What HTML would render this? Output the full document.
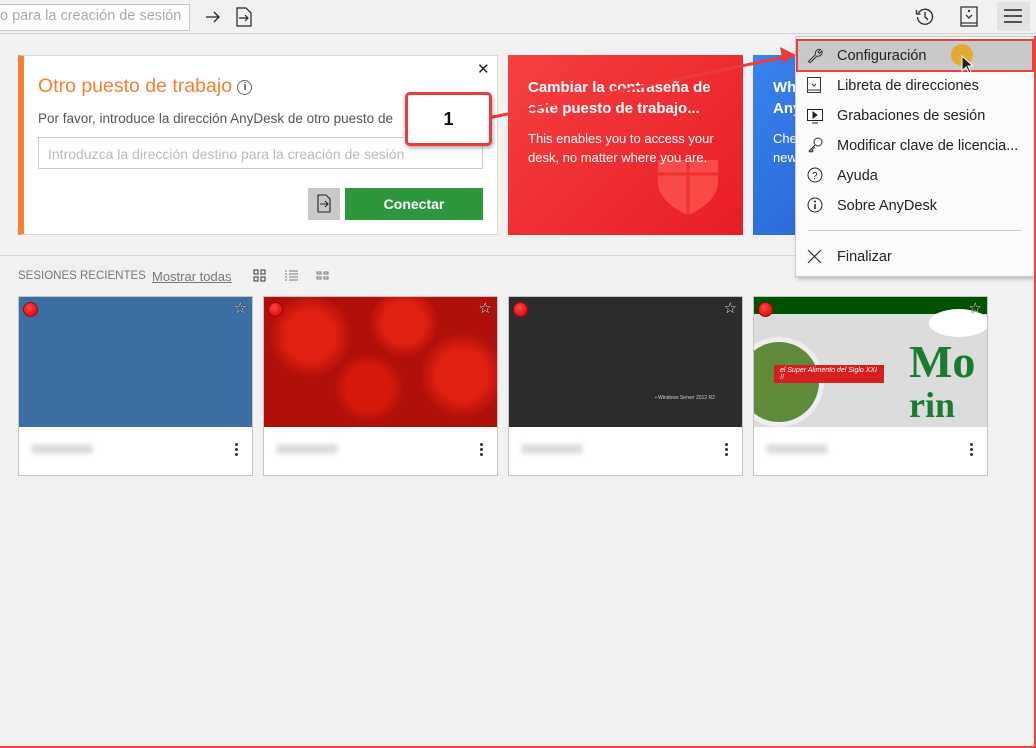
<!DOCTYPE html>
<html><head><meta charset="utf-8">
<style>
*{box-sizing:border-box;margin:0;padding:0}
body{width:1036px;height:748px;background:#f1f1f1;font-family:"Liberation Sans","DejaVu Sans",sans-serif;position:relative;overflow:hidden;color:#333}
.abs{position:absolute}
.tile{position:absolute;top:296px;width:235px;height:180px;background:#fff;border:1px solid #c4c4c4}
.tile .img{position:absolute;left:0;top:0;width:233px;height:130px}
.tile .dot{position:absolute;left:4px;top:5px;width:15px;height:15px;border-radius:50%;background:radial-gradient(circle at 40% 35%,#f44,#c00);border:1px solid #a00}
.tile .star{position:absolute;right:5px;top:2px;color:#fff;font-size:15px;text-shadow:0 0 1px #000,0 0 1px #000}
.tile .id{position:absolute;left:12px;top:147px;width:62px;height:10px;background:#ddd;filter:blur(2px);border-radius:3px}
.tile .more{position:absolute;right:14px;top:146px;width:3px}
.tile .more i{display:block;width:3px;height:3px;background:#333;border-radius:50%;margin-bottom:2px}
.mi{position:absolute;left:41px;font-size:14.5px;color:#222}
.ic{position:absolute;left:11px}
</style></head><body>
<div class="abs" style="left:0;top:0;width:1036px;height:34px;background:#f1f1f1;border-bottom:1px solid #d2d2d2"></div>
<div class="abs" style="left:-2px;top:4px;width:192px;height:27px;background:#fff;border:1px solid #c8c8c8"></div>
<div class="abs" style="left:0;top:8px;font-size:14.5px;color:#aaa;white-space:nowrap">o para la creación de sesión</div>
<svg class="abs" style="left:204px;top:8px" width="18" height="18" viewBox="0 0 18 18"><path d="M2 9h13M10 4l5 5-5 5" stroke="#222" stroke-width="1.3" fill="none"/></svg>
<svg class="abs" style="left:236px;top:7px" width="16" height="20" viewBox="0 0 16 20"><path d="M1 1h9l5 5v13H1z" stroke="#222" stroke-width="1.2" fill="none"/><path d="M3 11h9M9 8l3 3-3 3" stroke="#222" stroke-width="1.2" fill="none"/></svg>
<svg class="abs" style="left:915px;top:7px" width="20" height="20" viewBox="0 0 20 20"><path d="M3.5 6A7.5 7.5 0 1 1 2.5 10" stroke="#333" stroke-width="1.4" fill="none"/><path d="M1.5 3v4h4" stroke="#333" stroke-width="1.4" fill="none"/><path d="M10 5v5l3 3" stroke="#333" stroke-width="1.4" fill="none"/></svg>
<svg class="abs" style="left:960px;top:6px" width="18" height="22" viewBox="0 0 18 22"><rect x="1" y="1" width="16" height="19" stroke="#333" stroke-width="1.3" fill="none"/><path d="M1 17h16" stroke="#333" stroke-width="1.2"/><circle cx="9" cy="5" r="1.2" fill="#333"/><path d="M6 9l3 3 3-3" stroke="#333" stroke-width="1.3" fill="none"/></svg>
<div class="abs" style="left:997px;top:2px;width:33px;height:29px;background:#e2e2e2"></div>
<svg class="abs" style="left:1004px;top:9px" width="19" height="15"><path d="M0 1h18M0 7h18M0 13h18" stroke="#222" stroke-width="1.4"/></svg>

<div class="abs" style="left:18px;top:55px;width:480px;height:180px;background:#fff;border:1px solid #d8d8d8;border-left:6px solid #f58033"></div>
<div class="abs" style="left:38px;top:75px;font-size:19.5px;color:#f58033">Otro puesto de trabajo <span style="display:inline-block;width:15px;height:15px;border:1.3px solid #666;border-radius:50%;font-size:11px;color:#555;text-align:center;line-height:13px;vertical-align:2px;font-weight:bold">i</span></div>
<div class="abs" style="left:477px;top:60px;font-size:15px;color:#222">✕</div>
<div class="abs" style="left:38px;top:111px;font-size:13.5px;color:#555;white-space:nowrap">Por favor, introduce la dirección AnyDesk de otro puesto de</div>
<div class="abs" style="left:38px;top:137px;width:445px;height:32px;border:1px solid #ccc;background:#fff"></div>
<div class="abs" style="left:48px;top:146px;font-size:14px;color:#bbb;white-space:nowrap">Introduzca la dirección destino para la creación de sesión</div>
<div class="abs" style="left:308px;top:188px;width:32px;height:32px;background:#c8c8c8"></div>
<svg class="abs" style="left:317px;top:194px" width="14" height="19" viewBox="0 0 14 19"><path d="M1 1h8l4 4v13H1z" stroke="#222" stroke-width="1.1" fill="none"/><path d="M3 10h8M8 7l3 3-3 3" stroke="#222" stroke-width="1.1" fill="none"/></svg>
<div class="abs" style="left:345px;top:188px;width:138px;height:32px;background:#2e963c;color:#fff;font-size:14px;font-weight:bold;text-align:center;line-height:32px">Conectar</div>

<div class="abs" style="left:508px;top:55px;width:235px;height:180px;background:linear-gradient(135deg,#f54040,#e81d25);overflow:hidden">
<svg class="abs" style="left:150px;top:105px" width="60" height="55" viewBox="0 0 60 55"><path d="M0 0h60v22c0 15-15 27-30 33C15 49 0 37 0 22z" fill="#ff5b55" opacity=".7"/><path d="M30 0v55M0 14h60" stroke="#f0302f" stroke-width="3"/></svg>
</div>
<div class="abs" style="left:528px;top:77px;width:210px;font-size:15px;font-weight:bold;color:#fff;line-height:21px">Cambiar la contraseña de este puesto de trabajo...</div>
<div class="abs" style="left:528px;top:129px;width:210px;font-size:13px;color:#fff;line-height:19px">This enables you to access your desk, no matter where you are.</div>
<div class="abs" style="left:753px;top:55px;width:60px;height:180px;background:linear-gradient(135deg,#3a82ee,#2a6ad8)"></div>
<div class="abs" style="left:773px;top:77px;font-size:15px;font-weight:bold;color:#fff;line-height:21px">Wh<br>Any</div>
<div class="abs" style="left:773px;top:129px;font-size:13px;color:#fff;line-height:19px">Che<br>new</div>

<div class="abs" style="left:0;top:255px;width:800px;height:1px;background:#d6d6d6"></div>

<div class="abs" style="left:18px;top:270px;font-size:11.5px;color:#777;white-space:nowrap">SESIONES RECIENTES</div>
<div class="abs" style="left:152px;top:269px;font-size:13px;color:#777;text-decoration:underline">Mostrar todas</div>
<svg class="abs" style="left:253px;top:269px" width="13" height="13"><rect x="1" y="1" width="4" height="4" fill="none" stroke="#333"/><rect x="8" y="1" width="4" height="4" fill="none" stroke="#333"/><rect x="1" y="8" width="4" height="4" fill="none" stroke="#333"/><rect x="8" y="8" width="4" height="4" fill="none" stroke="#333"/></svg>
<svg class="abs" style="left:285px;top:270px" width="13" height="12"><path d="M0 1h2M4 1h9M0 4h2M4 4h9M0 7h2M4 7h9M0 10h2M4 10h9" stroke="#777"/></svg>
<svg class="abs" style="left:316px;top:271px" width="13" height="10"><rect x="1" y="1" width="4" height="2" fill="none" stroke="#777"/><rect x="8" y="1" width="4" height="2" fill="none" stroke="#777"/><rect x="1" y="6" width="4" height="2" fill="none" stroke="#777"/><rect x="8" y="6" width="4" height="2" fill="none" stroke="#777"/></svg>

<div class="tile" style="left:18px"><div class="img" style="background:#3b6ea3"></div><div class="dot"></div><div class="star">☆</div><div class="id"></div><div class="more"><i></i><i></i><i></i></div></div>
<div class="tile" style="left:263px"><div class="img" style="background:radial-gradient(circle at 20% 30%,#e02010 0 12%,transparent 20%),radial-gradient(circle at 60% 20%,#e02010 0 12%,transparent 20%),radial-gradient(circle at 45% 70%,#d81a0c 0 14%,transparent 22%),radial-gradient(circle at 85% 60%,#e02010 0 12%,transparent 20%),#b0100a"></div><div class="dot"></div><div class="star">☆</div><div class="id"></div><div class="more"><i></i><i></i><i></i></div></div>
<div class="tile" style="left:508px"><div class="img" style="background:#2c2c2c"><div class="abs" style="left:146px;top:98px;font-size:5px;color:#ccc">▪ Windows Server 2012 R2</div></div><div class="dot"></div><div class="star">☆</div><div class="id"></div><div class="more"><i></i><i></i><i></i></div></div>
<div class="tile" style="left:753px"><div class="img" style="background:linear-gradient(#005200 0 13%,#dcdcdc 13%);overflow:hidden">
<div class="abs" style="left:-20px;top:40px;width:90px;height:90px;border-radius:50%;background:#5f8a3a;border:5px solid #eee"></div>
<div class="abs" style="left:20px;top:68px;width:110px;height:18px;background:#d81f1f;color:#fff;font-size:7px;font-style:italic;padding:2px 6px">el Super Alimento del Siglo XXI !!</div>
<div class="abs" style="left:155px;top:45px;font-size:46px;font-family:'Liberation Serif',serif;color:#1a7a30;font-weight:bold;line-height:40px">Mo<br><span style="font-size:36px">rin</span></div>
<div class="abs" style="left:175px;top:12px;width:60px;height:28px;border-radius:50%;background:#fff"></div>
</div><div class="dot"></div><div class="star">☆</div><div class="id"></div><div class="more"><i></i><i></i><i></i></div></div>

<div class="abs" style="left:795px;top:36px;width:241px;height:241px;background:#fbfbfb;border:1px solid #ccc;box-shadow:2px 2px 4px rgba(0,0,0,.25)">
<div class="abs" style="left:0;top:2px;width:238px;height:33px;background:#c9c9c9;border:2px solid #ee3b3b"></div>
<svg class="ic" style="top:10px" width="16" height="16" viewBox="0 0 16 16"><path d="M1.5 14.5l7-7a4 4 0 0 1 5-5l-2.5 2.5 1.5 1.5 2.5-2.5a4 4 0 0 1-5 5l-7 7z" stroke="#333" fill="none"/></svg>
<div class="mi" style="top:11px">Configuración</div>
<div class="abs" style="left:155px;top:7px;width:22px;height:22px;border-radius:50%;background:#e4a723;opacity:.9"></div>
<svg class="abs" style="left:165px;top:18px" width="14" height="20" viewBox="0 0 14 20"><path d="M1 1v15l4-4 3 6 2-1-3-6h5z" fill="#222" stroke="#fff"/></svg>
<svg class="ic" style="top:40px" width="14" height="17"><rect x=".5" y=".5" width="13" height="15" stroke="#333" fill="none"/><path d="M1 13h12" stroke="#333"/><path d="M5 7l2 2 2-2" stroke="#333" fill="none"/></svg>
<div class="mi" style="top:41px">Libreta de direcciones</div>
<svg class="ic" style="top:72px" width="16" height="15"><rect x=".5" y=".5" width="15" height="11" stroke="#222" fill="none"/><path d="M6 3v6l4-3z M5 14h6" fill="#222" stroke="#222"/></svg>
<div class="mi" style="top:71px">Grabaciones de sesión</div>
<svg class="ic" style="top:100px" width="16" height="16"><circle cx="11" cy="5" r="4" stroke="#333" fill="none"/><path d="M8 8l-6 6 1 1 1-1 1 1 1-1-1-1 3-3" stroke="#333" fill="none"/></svg>
<div class="mi" style="top:101px">Modificar clave de licencia...</div>
<svg class="ic" style="top:130px" width="16" height="16"><circle cx="8" cy="8" r="7" stroke="#222" fill="none"/><text x="5" y="12" font-size="10" fill="#222" font-family="Liberation Sans">?</text></svg>
<div class="mi" style="top:131px">Ayuda</div>
<svg class="ic" style="top:160px" width="16" height="16"><circle cx="8" cy="8" r="7" stroke="#222" fill="none"/><path d="M8 7v5" stroke="#222" stroke-width="1.5"/><circle cx="8" cy="4.5" r="1" fill="#222"/></svg>
<div class="mi" style="top:161px">Sobre AnyDesk</div>
<div class="abs" style="left:12px;top:193px;width:214px;height:1px;background:#ccc"></div>
<svg class="ic" style="top:212px" width="15" height="15"><path d="M1 1l13 13M14 1L1 14" stroke="#333" stroke-width="1.2"/></svg>
<div class="mi" style="top:212px">Finalizar</div>
</div>

<svg class="abs" style="left:0;top:0" width="1036" height="300"><line x1="488" y1="118" x2="785" y2="57" stroke="#ec3b3b" stroke-width="3"/><path d="M796 55l-16-8 3 16z" fill="#ec3b3b"/></svg>
<div class="abs" style="left:405px;top:92px;width:87px;height:54px;background:#fff;border:3px solid #ec3b3b;border-radius:5px;box-shadow:1px 2px 4px rgba(0,0,0,.35);text-align:center;line-height:48px;font-size:18px;font-weight:bold;color:#111">1</div>

<div class="abs" style="left:0;top:746px;width:1036px;height:2px;background:#e84a3a"></div>
<div class="abs" style="left:1034px;top:36px;width:2px;height:712px;background:#e84a3a"></div>
</body></html>
